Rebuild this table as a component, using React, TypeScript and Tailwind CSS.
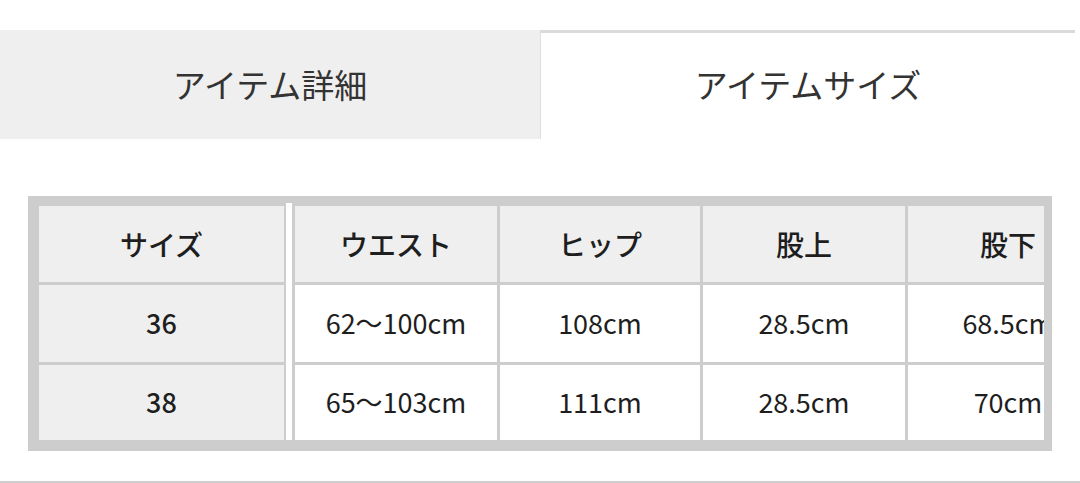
const headers = ["ウエスト", "ヒップ", "股上", "股下"];

const rows = [
  { size: "36", values: ["62〜100cm", "108cm", "28.5cm", "68.5cm"] },
  { size: "38", values: ["65〜103cm", "111cm", "28.5cm", "70cm"] },
];

const rowHeights = ["h-[76px]", "h-[77px]", "h-[75px]"];

export default function App() {
  return (
    <div className="w-[1080px] h-[483px] bg-white overflow-hidden text-[#1e1e1e] font-['Noto_Sans_CJK_JP','Noto_Sans',sans-serif]">
      {/* tabs */}
      <div className="pt-[30px] flex">
        <div className="w-[541px] h-[109px] bg-[#efefef] border-r border-[#dedede] flex items-center justify-center text-[33px] font-normal text-[#333]">
          アイテム詳細
        </div>
        <div className="w-[534px] h-[109px] border-t-[3px] border-[#dadada] flex items-center justify-center text-[33px] font-normal text-[#333] pb-[3px]">
          アイテムサイズ
        </div>
      </div>

      {/* size table */}
      <div className="mt-[57px] ml-[28px] w-[1024px] bg-[#cdcdcd] pt-[10px] pr-[8px] pb-[11px] pl-[11px] flex">
        {/* fixed column */}
        <div className="w-[245px] flex flex-col gap-[3px] shrink-0">
          <div className={`${rowHeights[0]} bg-[#efefef] flex items-center justify-center text-[28px] font-medium`}>
            サイズ
          </div>
          {rows.map((r, i) => (
            <div
              key={r.size}
              className={`${rowHeights[i + 1]} bg-[#efefef] flex items-center justify-center text-[27px] font-medium`}
            >
              {r.size}
            </div>
          ))}
        </div>

        <div className="ml-[2px] mr-[3px] w-[6px] bg-white shrink-0 -mt-[3px]" />

        {/* scrolling columns */}
        <div className="flex-1 overflow-hidden">
          <div className="grid grid-cols-[202px_200px_202px_200px] gap-[3px] w-max">
            {headers.map((h) => (
              <div
                key={h}
                className={`${rowHeights[0]} bg-[#efefef] flex items-center justify-center text-[28px] font-medium`}
              >
                {h}
              </div>
            ))}
            {rows.map((r, i) =>
              r.values.map((v, j) => (
                <div
                  key={`${i}-${j}`}
                  className={`${rowHeights[i + 1]} bg-white flex items-center justify-center text-[27px]`}
                >
                  {v}
                </div>
              ))
            )}
          </div>
        </div>
      </div>

      <div className="mt-[30px] h-[2px] bg-[#cfcfcf]" />
    </div>
  );
}
